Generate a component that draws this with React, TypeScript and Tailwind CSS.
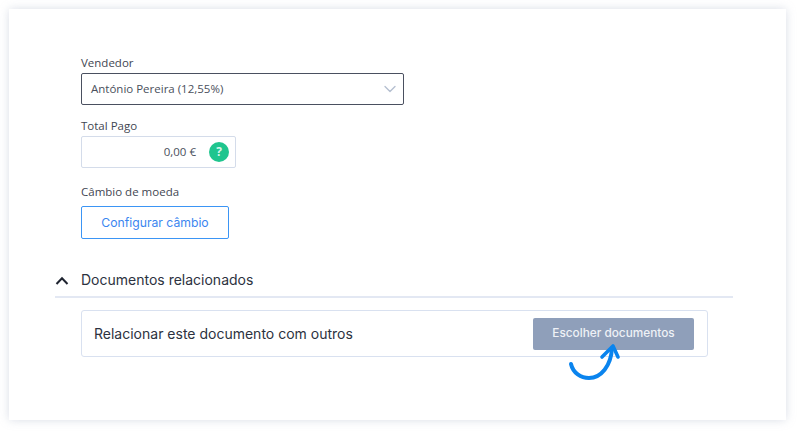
import { ChevronDown } from "lucide-react";

const openSans = "font-['Open_Sans',sans-serif]";
const heading = "font-['Inter',sans-serif]";

function Label({ children }: { children: string }) {
  return <div className={`${openSans} text-[11.5px] leading-[16px] text-[#3f4652]`}>{children}</div>;
}

export default function App() {
  return (
    <div className="h-[435px] w-[800px] overflow-hidden bg-white pl-[9px] pt-[9px]">
      <div className="h-[411px] w-[777px] bg-white pl-[46px] pt-[46px] shadow-[0_0_9px_rgba(150,160,185,0.35)]">
        <div className="pl-[26px]">
          <Label>Vendedor</Label>
          <div className="mt-[2px] flex h-[32px] w-[323px] items-center justify-between rounded-[2px] border border-[#4a5060] pl-[9px] pr-[3px]">
            <span className={`${openSans} text-[11.5px] text-[#4a505c]`}>António Pereira (12,55%)</span>
            <ChevronDown className="h-[20px] w-[20px] text-[#b4bfd0]" strokeWidth={1.6} />
          </div>

          <div className="mt-[13px]">
            <Label>Total Pago</Label>
          </div>
          <div className="mt-[2px] flex h-[32px] w-[155px] items-center justify-end rounded-[2px] border border-[#d4dcea] pr-[6px]">
            <span className={`${openSans} text-[11.5px] text-[#4a505c]`}>0,00 €</span>
            <span className={`${openSans} ml-[13px] flex h-[20px] w-[20px] items-center justify-center rounded-full bg-[#1fc58e] text-[12px] font-bold text-[#d8f5ea]`}>?</span>
          </div>

          <div className="mt-[16px]">
            <Label>Câmbio de moeda</Label>
          </div>
          <button className={`${heading} mt-[6px] block h-[33px] w-[148px] rounded-[2px] border border-[#3b95f5] pt-[1px] text-[12.2px] text-[#3b86f0]`}>
            Configurar câmbio
          </button>
        </div>

        <div className="mt-[33px] flex h-[26px] w-[678px] items-start gap-[12px] border-b-2 border-[#e3e8f3]">
          <svg className="mt-[4px]" width="14" height="9" viewBox="0 0 14 9" fill="none" stroke="#1f2430" strokeWidth="2">
            <path d="M1.5 8 L7 2.2 L12.5 8" />
          </svg>
          <span className={`${heading} -mt-[1px] text-[14px] leading-[18px] text-[#2c3240]`}>Documentos relacionados</span>
        </div>

        <div className="relative ml-[26px] mt-[12px] flex h-[47px] w-[627px] items-center justify-between rounded-[3px] border border-[#d9e1f0] pl-[12px] pr-[13px]">
          <span className={`${heading} -mt-[1px] text-[14px] text-[#2c3240]`}>Relacionar este documento com outros</span>
          <button className={`${heading} h-[32px] w-[161px] rounded-[2px] bg-[#8f9fba] text-[11.8px] font-medium text-[#eef1f6]`}>
            Escolher documentos
          </button>
          <svg className="absolute left-[483px] top-[29px]" width="60" height="45" viewBox="0 0 60 45" fill="none" stroke="#0a84ee" strokeLinecap="round" strokeLinejoin="round">
            <path d="M6 24 C8 33 16 38 24 38 C36 38 46 26 47 8" strokeWidth="4" />
            <path d="M37 17 L48 6 L53 17" strokeWidth="3.6" />
          </svg>
        </div>
      </div>
    </div>
  );
}
